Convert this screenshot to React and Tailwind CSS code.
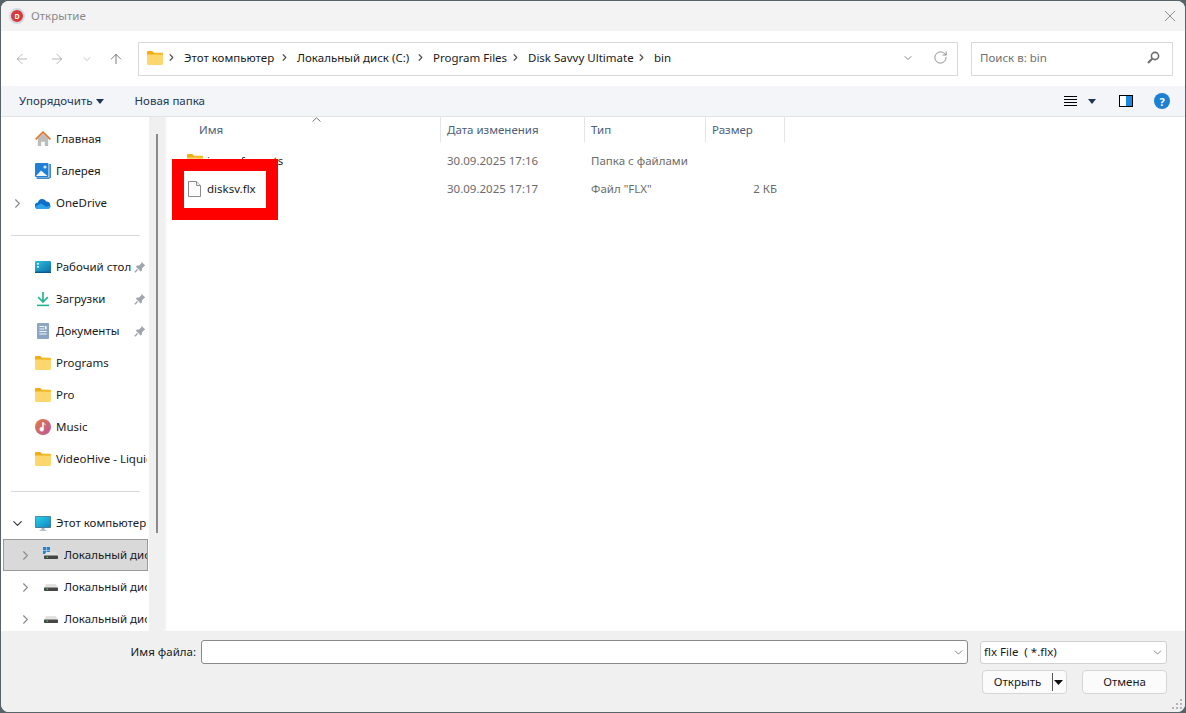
import React from "react";
import { ArrowLeft, ArrowRight, ArrowUp, ChevronDown, ChevronRight, RotateCw } from "lucide-react";

const Folder = ({ className = "w-4 h-[14px]" }) => (
  <svg viewBox="0 0 16 14" className={className}>
    <path d="M0 1.2C0 .5.5 0 1.2 0h4l1.8 1.8h7.8c.7 0 1.2.5 1.2 1.2v1H0z" fill="#f0ae13" />
    <path d="M0 3.4h16v9.400c0 .7-.5 1.200-1.200 1.200H1.200C.5 14 0 13.500 0 12.800z" fill="#fbd76e" />
    <path d="M0 3.400h6.600l1.200-1H16v1.200H0z" fill="#f5c23c" />
  </svg>
);
const Home = () => (
  <svg viewBox="0 0 16 16" className="w-4 h-4">
    <path d="M2.800 7.500 8 2.800l5.200 4.700V15H9.800v-4.200H6.200V15H2.800z" fill="#bcbcbc" />
    <path d="M.6 8.300 8 1.200l7.400 7.100" fill="none" stroke="#e0762c" strokeWidth="1.800" />
  </svg>
);
const Gallery = () => (
  <svg viewBox="0 0 16 16" className="w-4 h-4">
    <rect x="0" y="0" width="13.500" height="14" rx="1" fill="#1f80d4" />
    <rect x="14.400" y="1" width="1.400" height="14" fill="#1b6fb8" />
    <rect x="1.500" y="14.400" width="13" height="1.400" fill="#1b6fb8" />
    <path d="M1 13 6 7.500l6.500 5.500z" fill="#eef6fc" />
    <circle cx="10" cy="4" r="1.600" fill="#cfe6f8" />
  </svg>
);
const Cloud = () => (
  <svg viewBox="0 0 16 11" className="w-4 h-[11px]">
    <path d="M3.400 11A3.300 3.300 0 0 1 3 4.400 4.400 4.400 0 0 1 11.300 3.600 3.800 3.800 0 0 1 12.600 11z" fill="#0f6fc6" />
    <path d="M3.400 11c-1.800 0-2.900-1-3.200-2.500L6 5.600l5 3.200 4.800-1A3.400 3.400 0 0 1 12.600 11z" fill="#2fa3ea" />
  </svg>
);
const Desktop = () => (
  <svg viewBox="0 0 16 12" className="w-4 h-3">
    <defs>
      <linearGradient id="dg" x1="0" y1="0" x2="1" y2="1">
        <stop offset="0" stopColor="#2cc1e0" />
        <stop offset="1" stopColor="#0d6fa8" />
      </linearGradient>
    </defs>
    <rect width="16" height="11" rx="1" fill="url(#dg)" />
    <rect y="10.600" width="16" height="1.400" fill="#0a5a86" />
    <rect x="2" y="2" width="2" height="1.600" fill="#e8fbff" />
    <rect x="2" y="5" width="2" height="1.600" fill="#e8fbff" />
  </svg>
);
const Download = () => (
  <svg viewBox="0 0 14 16" className="w-[14px] h-4">
    <path d="M7 1v9.500M2.200 6.200 7 11l4.800-4.800" fill="none" stroke="#25b592" strokeWidth="1.700" />
    <rect x="1" y="13.600" width="12" height="1.600" fill="#25b592" />
  </svg>
);
const Doc = () => (
  <svg viewBox="0 0 12 16" className="w-3 h-4">
    <rect width="12" height="16" rx="1" fill="#8ba5c4" />
    <path d="M2.400 3.500H7M2.400 6H7M2.400 8.500h7.200M2.400 11h7.200" stroke="#f4f7fb" strokeWidth="1" />
    <rect x="7.800" y="3" width="1.800" height="3.400" fill="#f4f7fb" />
  </svg>
);
const Music = () => (
  <svg viewBox="0 0 16 16" className="w-4 h-4">
    <defs>
      <linearGradient id="mg" x1="0" y1="0" x2="1" y2="1">
        <stop offset="0" stopColor="#e5793f" />
        <stop offset="1" stopColor="#b9589e" />
      </linearGradient>
    </defs>
    <circle cx="8" cy="8" r="8" fill="url(#mg)" />
    <path d="M8.600 3.600v6.600a1.900 1.900 0 1 1-1.200-1.700V3.600zM8.600 3.800c.4 1.400 1.400 1.600 2.200 2.200" fill="#fff" stroke="#fff" strokeWidth=".6" />
  </svg>
);
const Monitor = () => (
  <svg viewBox="0 0 16 15" className="w-4 h-[15px]">
    <defs>
      <linearGradient id="pg" x1="0" y1="0" x2="1" y2="1">
        <stop offset="0" stopColor="#2ad0e4" />
        <stop offset="1" stopColor="#0f87c8" />
      </linearGradient>
    </defs>
    <rect width="16" height="12" rx="1" fill="#4b7a92" />
    <rect x=".7" y=".7" width="14.600" height="10.400" fill="url(#pg)" />
    <rect x="6.600" y="12" width="2.800" height="2" fill="#9fb0ba" />
    <rect x="4.600" y="13.800" width="6.800" height="1.200" fill="#b8c4cb" />
  </svg>
);
const Drive = ({ win }) => (
  <svg viewBox="0 0 16 16" className="w-4 h-4">
    {win && (
      <g fill="#1c86d8">
        <rect x="0" y="0" width="3.200" height="3.200" />
        <rect x="3.800" y="0" width="3.200" height="3.200" />
        <rect x="0" y="3.800" width="3.200" height="3.200" />
        <rect x="3.800" y="3.800" width="3.200" height="3.200" />
      </g>
    )}
    <path d="M3.200 5h9.600l2.200 3.500H1z" fill="#e2e2e2" />
    <rect x="1" y="8.500" width="14" height="3.500" rx=".7" fill="#454545" />
    <rect x="3.400" y="9.600" width="1.600" height="1.200" fill="#35d04a" />
  </svg>
);
const Pin = () => (
  <svg viewBox="0 0 12 12" className="w-3 h-3">
    <path d="M7.400.8 11.200 4.600l-1.200.6-2 2.200-.1 2.200-1.200 1-4.800-4.900 1-1.100 2.200-.2 2.100-2z" fill="#a0a6ad" />
    <path d="M3.600 8.400.8 11.200" stroke="#a0a6ad" strokeWidth="1.400" />
  </svg>
);
const FileIcon = () => (
  <svg viewBox="0 0 13 16" className="w-[13px] h-4">
    <path d="M.5.5h8l4 4v11H.5z" fill="#fbfbfb" stroke="#8b8b8b" />
    <path d="M8.500.5v4h4" fill="#eee" stroke="#8b8b8b" />
  </svg>
);
const Caret = ({ className = "" }) => (
  <svg viewBox="0 0 8 5" className={"w-2 h-[5px] " + className}>
    <path d="M0 0h8L4 5z" fill="#1f3658" />
  </svg>
);

const NavRow = ({ icon, label, pin, chev, nested, selected }) => (
  <div
    className={
      "ml-[2px] w-[145px] h-8 flex items-center border shrink-0 " +
      (selected ? "bg-[#d9d9d9] border-[#999999] " : "border-transparent ") +
      (nested ? "pl-2" : "")
    }
  >
    <div className="w-[27px] flex justify-center shrink-0">
      {chev === "right" && <ChevronRight className="w-[15px] h-[15px] text-[#8c8c8c]" strokeWidth={1.8} />}
      {chev === "down" && <ChevronDown className="w-[15px] h-[15px] text-[#333333]" strokeWidth={1.8} />}
    </div>
    <div className="w-4 ml-1 flex justify-center shrink-0">{icon}</div>
    <div className="ml-[5px] flex-1 min-w-0 overflow-hidden whitespace-nowrap text-[11.5px] text-[#1a1a1a]">{label}</div>
    {pin && (
      <div className="w-3 mr-[1px] ml-[1px] shrink-0">
        <Pin />
      </div>
    )}
  </div>
);

const Sep = () => (
  <div className="h-8 flex items-center shrink-0 pl-[10px]">
    <div className="w-[129px] h-px bg-[#d9d9d9]" />
  </div>
);

const Crumb = ({ children, w }) => (
  <>
    <ChevronRight className="w-[11px] h-[11px] text-[#555555] shrink-0" strokeWidth={2.6} />
    <span className="whitespace-nowrap text-[11.5px] text-[#1a1a1a] ml-[7px]" style={{ width: w }}>
      {children}
    </span>
  </>
);

const Head = ({ children, pad = "pl-[6px]" }) => (
  <div className={"h-[25px] border-r border-[#e5e5e5] flex items-center text-[11.5px] text-[#4c607a] " + pad}>{children}</div>
);

export default function App() {
  return (
    <div
      className="w-[1186px] h-[713px] px-px pt-px pb-px bg-[#56646a] overflow-hidden"
      style={{ fontFamily: '"Noto Sans", "Open Sans", sans-serif' }}
    >
      <div className="h-[711px] rounded-lg overflow-hidden flex flex-col bg-white">
        {/* title bar */}
        <div className="h-[30px] bg-[#f3f3f3] flex items-center pl-[8px] pr-[9px] shrink-0">
          <div className="w-4 h-4 rounded-full bg-[#d73a3a] border-2 border-[#d5d9e2] flex items-center justify-center text-[7px] font-bold text-white leading-none">
            D
          </div>
          <span className="ml-[6px] text-[11.5px] text-[#8a8a8a]">Открытие</span>
          <div className="flex-1" />
          <svg viewBox="0 0 12 12" className="w-3 h-3">
            <path d="M1 1l10 10M11 1 1 11" stroke="#8f8f8f" strokeWidth="1" fill="none" />
          </svg>
        </div>
        {/* nav bar */}
        <div className="h-[55px] bg-white flex items-center shrink-0">
          <ArrowLeft className="ml-[13px] w-4 h-4 text-[#9c9c9c]" strokeWidth={1.1} />
          <ArrowRight className="ml-[19px] w-4 h-4 text-[#9c9c9c]" strokeWidth={1.1} />
          <ChevronDown className="ml-[16px] w-[12px] h-[12px] text-[#9c9c9c]" strokeWidth={1.2} />
          <ArrowUp className="ml-[15px] w-4 h-4 text-[#5a5a5a]" strokeWidth={1.2} />
          <div className="ml-[14px] w-[820px] h-[34px] border border-[#d9d9d9] flex items-center pl-2 pr-[9px] pb-[2px]">
            <Folder />
            <div className="w-[3px]" />
            <Crumb w={95}>Этот компьютер</Crumb>
            <Crumb w={118}>Локальный диск (C:)</Crumb>
            <Crumb w={77}>Program Files</Crumb>
            <Crumb w={108}>Disk Savvy Ultimate</Crumb>
            <Crumb w={18}>bin</Crumb>
            <div className="flex-1" />
            <ChevronDown className="w-[12px] h-[12px] text-[#555555]" strokeWidth={1.4} />
            <RotateCw className="ml-[19px] w-[15px] h-[15px] text-[#7a7a7a]" strokeWidth={1.3} />
          </div>
          <div className="ml-[13px] w-[202px] h-[34px] border border-[#d9d9d9] flex items-center pl-2 pr-[12px] pb-[2px]">
            <span className="text-[11.5px] text-[#6f6f6f]">Поиск в: bin</span>
            <div className="flex-1" />
            <svg viewBox="0 0 13 13" className="w-[13px] h-[13px]">
              <circle cx="8" cy="5" r="3.600" fill="none" stroke="#6e6e6e" strokeWidth="1.600" />
              <path d="M5.200 7.800 1 12" stroke="#6e6e6e" strokeWidth="2" />
            </svg>
          </div>
        </div>
        {/* toolbar */}
        <div className="h-[31px] bg-[#f3f5f8] border-b border-[#e3e3e3] flex items-center shrink-0 pl-[18px] pr-[15px]">
          <span className="text-[11.5px] text-[#1f3658]">Упорядочить</span>
          <Caret className="ml-[3px]" />
          <span className="ml-[31px] text-[11.5px] text-[#1f3658]">Новая папка</span>
          <div className="flex-1" />
          <div className="w-[13px] h-[11px] flex flex-col justify-between">
            <div className="h-px bg-black" />
            <div className="h-px bg-black" />
            <div className="h-px bg-black" />
            <div className="h-px bg-black" />
          </div>
          <Caret className="ml-[11px]" />
          <div className="ml-[23px] w-[14px] h-[12px] border border-black flex">
            <div className="w-1/2 bg-white" />
            <div className="w-1/2 bg-[#1e88e0]" />
          </div>
          <div className="ml-[21px] w-4 h-4 rounded-full bg-[#1b7fd4] flex items-center justify-center text-[11px] font-bold text-white leading-none">
            ?
          </div>
        </div>
        {/* body */}
        <div className="flex-1 flex min-h-0">
          <div className="w-[148px] shrink-0 overflow-hidden pt-[6px] flex flex-col">
            <NavRow icon={<Home />} label="Главная" />
            <NavRow icon={<Gallery />} label="Галерея" />
            <NavRow icon={<Cloud />} label="OneDrive" chev="right" />
            <Sep />
            <NavRow icon={<Desktop />} label="Рабочий стол" pin />
            <NavRow icon={<Download />} label="Загрузки" pin />
            <NavRow icon={<Doc />} label="Документы" pin />
            <NavRow icon={<Folder />} label="Programs" />
            <NavRow icon={<Folder />} label="Pro" />
            <NavRow icon={<Music />} label="Music" />
            <NavRow icon={<Folder />} label="VideoHive - Liquid" />
            <Sep />
            <NavRow icon={<Monitor />} label="Этот компьютер" chev="down" />
            <NavRow icon={<Drive win />} label="Локальный диск (C:)" chev="right" nested selected />
            <NavRow icon={<Drive />} label="Локальный диск (D:)" chev="right" nested />
            <NavRow icon={<Drive />} label="Локальный диск (E:)" chev="right" nested />
          </div>
          <div className="w-4 bg-[#f0f0f0] shrink-0 pt-[17px] pl-[7px]">
            <div className="w-[2px] h-[399px] bg-[#8a8a8a]" />
          </div>
          <div className="w-[2px] bg-[#f7f7f7] shrink-0" />
          {/* files */}
          <div className="flex-1 relative overflow-hidden">
            <div className="grid grid-cols-[274px_144px_121px_79px]">
              <Head pad="pl-[32px]">Имя</Head>
              <Head>Дата изменения</Head>
              <Head>Тип</Head>
              <Head>Размер</Head>
            </div>
            <svg viewBox="0 0 9 5" className="absolute left-[145px] top-0 w-[9px] h-[5px]">
              <path d="M.5 4.500 4.500.8l4 3.700" fill="none" stroke="#777777" strokeWidth="1" />
            </svg>
            <div className="grid grid-cols-[274px_144px_121px_79px] mt-[5px] text-[11.5px] text-[#6b6b6b]">
              <div className="h-[28px] flex items-center pl-[20px] text-[#1a1a1a]">
                <Folder />
                <span className="ml-[4px]">imageformats</span>
              </div>
              <div className="h-[28px] flex items-center pl-[6px]">30.09.2025 17:16</div>
              <div className="h-[28px] flex items-center pl-[6px]">Папка с файлами</div>
              <div className="h-[28px]" />
              <div className="h-[28px] flex items-center pl-[21px] text-[#1a1a1a]">
                <FileIcon />
                <span className="ml-[6px]">disksv.flx</span>
              </div>
              <div className="h-[28px] flex items-center pl-[6px]">30.09.2025 17:17</div>
              <div className="h-[28px] flex items-center pl-[6px]">Файл "FLX"</div>
              <div className="h-[28px] flex items-center justify-end pr-[8px]">2 КБ</div>
            </div>
            <div className="absolute left-[5px] top-[42px] w-[106px] h-[61px] border-[12px] border-[#ff0000]" />
          </div>
        </div>
        {/* bottom */}
        <div className="h-[81px] bg-[#f0f0f0] shrink-0 relative">
          <div className="flex items-center pt-[9px]">
            <span className="w-[195px] text-right text-[11.5px] text-[#1a1a1a] whitespace-nowrap">Имя файла:</span>
            <div className="ml-[5px] w-[767px] h-[24px] bg-white border border-[#8a8a8a] rounded-[3px] flex items-center justify-end pr-[2px]">
              <ChevronDown className="w-[13px] h-[13px] text-[#555555]" strokeWidth={1.3} />
            </div>
            <div className="ml-[12px] w-[187px] h-[23px] bg-white border border-[#d0d0d0] rounded-[3px] flex items-center pl-[3px] pr-[2px] text-[11.5px] text-[#1a1a1a]">
              <span className="whitespace-pre">flx File  ( *.flx)</span>
              <div className="flex-1" />
              <ChevronDown className="w-[13px] h-[13px] text-[#555555]" strokeWidth={1.3} />
            </div>
          </div>
          <div className="flex justify-end pr-[18px] mt-[6px]">
            <div className="w-[85px] h-[24px] bg-[#fbfbfb] border border-[#d5d5d5] rounded-[4px] flex items-center text-[11.5px] text-[#1a1a1a]">
              <span className="w-[69px] text-center">Открыть</span>
              <div className="w-px h-[18px] bg-[#555555]" />
              <div className="ml-[1px]">
                <svg viewBox="0 0 9 5" className="w-[9px] h-[5px]">
                  <path d="M0 0h9L4.500 5z" fill="#111111" />
                </svg>
              </div>
            </div>
            <div className="ml-[15px] w-[85px] h-[24px] bg-[#fbfbfb] border border-[#d5d5d5] rounded-[4px] flex items-center justify-center text-[11.5px] text-[#1a1a1a]">
              Отмена
            </div>
          </div>
          <svg viewBox="0 0 11 11" className="absolute right-[2px] bottom-[2px] w-[11px] h-[11px]">
            <g fill="#b5b5b5">
              <rect x="8" y="0" width="2" height="2" />
              <rect x="4" y="4" width="2" height="2" />
              <rect x="8" y="4" width="2" height="2" />
              <rect x="0" y="8" width="2" height="2" />
              <rect x="4" y="8" width="2" height="2" />
              <rect x="8" y="8" width="2" height="2" />
            </g>
          </svg>
        </div>
      </div>
    </div>
  );
}
